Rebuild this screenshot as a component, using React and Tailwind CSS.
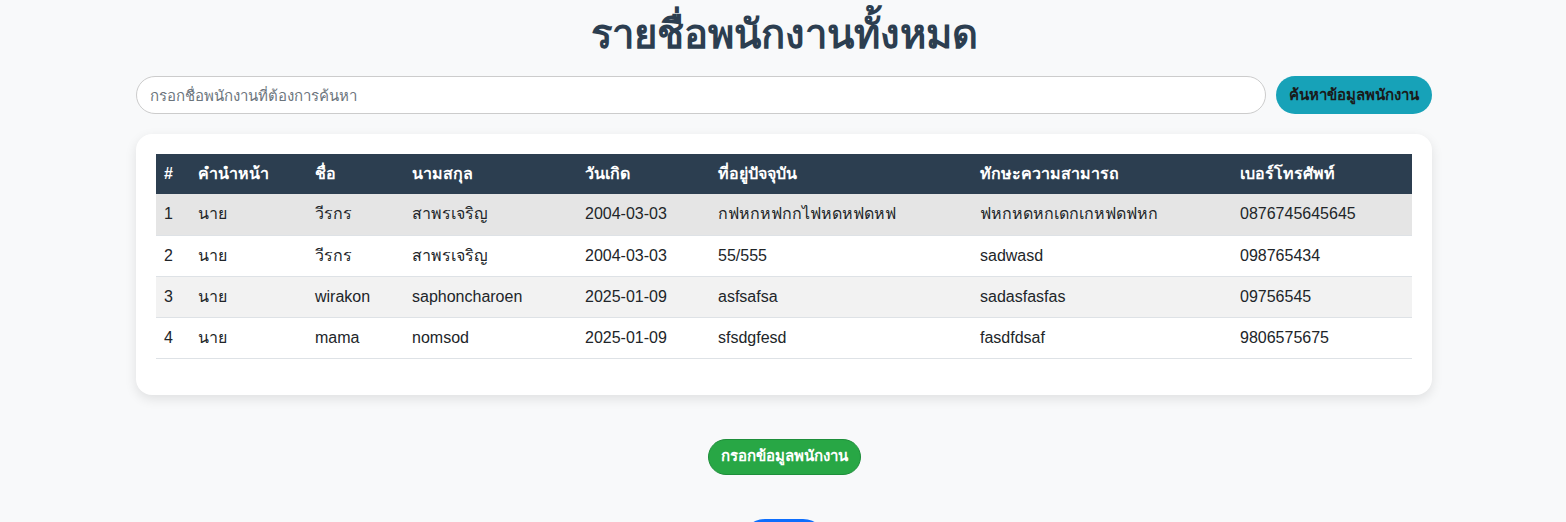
import React, { useState } from 'react';

const employees = [
  { id: 1, prefix: 'นาย', name: 'วีรกร', surname: 'สาพรเจริญ', birth: '2004-03-03', address: 'กฟหกหฟกกไฟหดหฟดหฟ', skill: 'ฟหกหดหกเดกเกหฟดฟหก', phone: '0876745645645' },
  { id: 2, prefix: 'นาย', name: 'วีรกร', surname: 'สาพรเจริญ', birth: '2004-03-03', address: '55/555', skill: 'sadwasd', phone: '098765434' },
  { id: 3, prefix: 'นาย', name: 'wirakon', surname: 'saphoncharoen', birth: '2025-01-09', address: 'asfsafsa', skill: 'sadasfasfas', phone: '09756545' },
  { id: 4, prefix: 'นาย', name: 'mama', surname: 'nomsod', birth: '2025-01-09', address: 'sfsdgfesd', skill: 'fasdfdsaf', phone: '9806575675' },
];

function App() {
  const [search, setSearch] = useState('');

  return (
    <div className="bg-[#f8f9fa] min-h-screen font-['Liberation_Sans',Tahoma,sans-serif] text-[#212529]">
      <div className="w-[1296px] ml-[136px] flex flex-col items-center">
        <h1 className="text-[40px] font-bold text-[#2c3e50] leading-[48px] mt-[10px] mb-[18px]">รายชื่อพนักงานทั้งหมด</h1>

        {/* Search */}
        <div className="w-full flex items-center gap-[10px]">
          <input
            value={search}
            onChange={(e) => setSearch(e.target.value)}
            placeholder="กรอกชื่อพนักงานที่ต้องการค้นหา"
            className="flex-1 h-[38px] rounded-full border border-[#ccc] bg-white px-[13px] text-[15px] text-[#495057] placeholder:text-[#6c757d] outline-none"
          />
          <button className="h-[38px] px-[13px] rounded-full bg-[#17a2b8] text-[#1a1a1a] text-[15px] font-bold">ค้นหาข้อมูลพนักงาน</button>
        </div>

        {/* Table card */}
        <div className="w-full bg-white rounded-[16px] shadow-[0_4px_12px_rgba(0,0,0,0.1)] mt-[20px] p-[20px] pb-[36px]">
          <table className="w-full border-collapse text-left text-[16px]">
            <thead className="bg-[#2c3e50] text-white">
              <tr className="h-[40px]">
                <th className="w-[34px] px-[8px] font-bold">#</th>
                <th className="w-[117px] px-[8px] font-bold">คำนำหน้า</th>
                <th className="w-[97px] px-[8px] font-bold">ชื่อ</th>
                <th className="w-[173px] px-[8px] font-bold">นามสกุล</th>
                <th className="w-[133px] px-[8px] font-bold">วันเกิด</th>
                <th className="w-[262px] px-[8px] font-bold">ที่อยู่ปัจจุบัน</th>
                <th className="w-[260px] px-[8px] font-bold">ทักษะความสามารถ</th>
                <th className="px-[8px] font-bold">เบอร์โทรศัพท์</th>
              </tr>
            </thead>
            <tbody>
              {employees.map((e, i) => (
                <tr
                  key={e.id}
                  className={`h-[41px] border-b border-[#dee2e6] ${i === 0 ? 'bg-[#e5e5e5]' : i % 2 === 0 ? 'bg-[#f2f2f2]' : 'bg-white'}`}
                >
                  <td className="px-[8px]">{e.id}</td>
                  <td className="px-[8px]">{e.prefix}</td>
                  <td className="px-[8px]">{e.name}</td>
                  <td className="px-[8px]">{e.surname}</td>
                  <td className="px-[8px]">{e.birth}</td>
                  <td className="px-[8px]">{e.address}</td>
                  <td className="px-[8px]">{e.skill}</td>
                  <td className="px-[8px]">{e.phone}</td>
                </tr>
              ))}
            </tbody>
          </table>
        </div>

        <button className="mt-[44px] h-[36px] px-[12px] rounded-full bg-[#28a745] border border-[#1e8e3a] text-white text-[15px] font-bold">กรอกข้อมูลพนักงาน</button>

        <button className="mt-[44px] h-[48px] w-[86px] rounded-full bg-[#0d6efd] text-white text-[15px] font-bold">ออก</button>
      </div>
    </div>
  );
}

export default App;
